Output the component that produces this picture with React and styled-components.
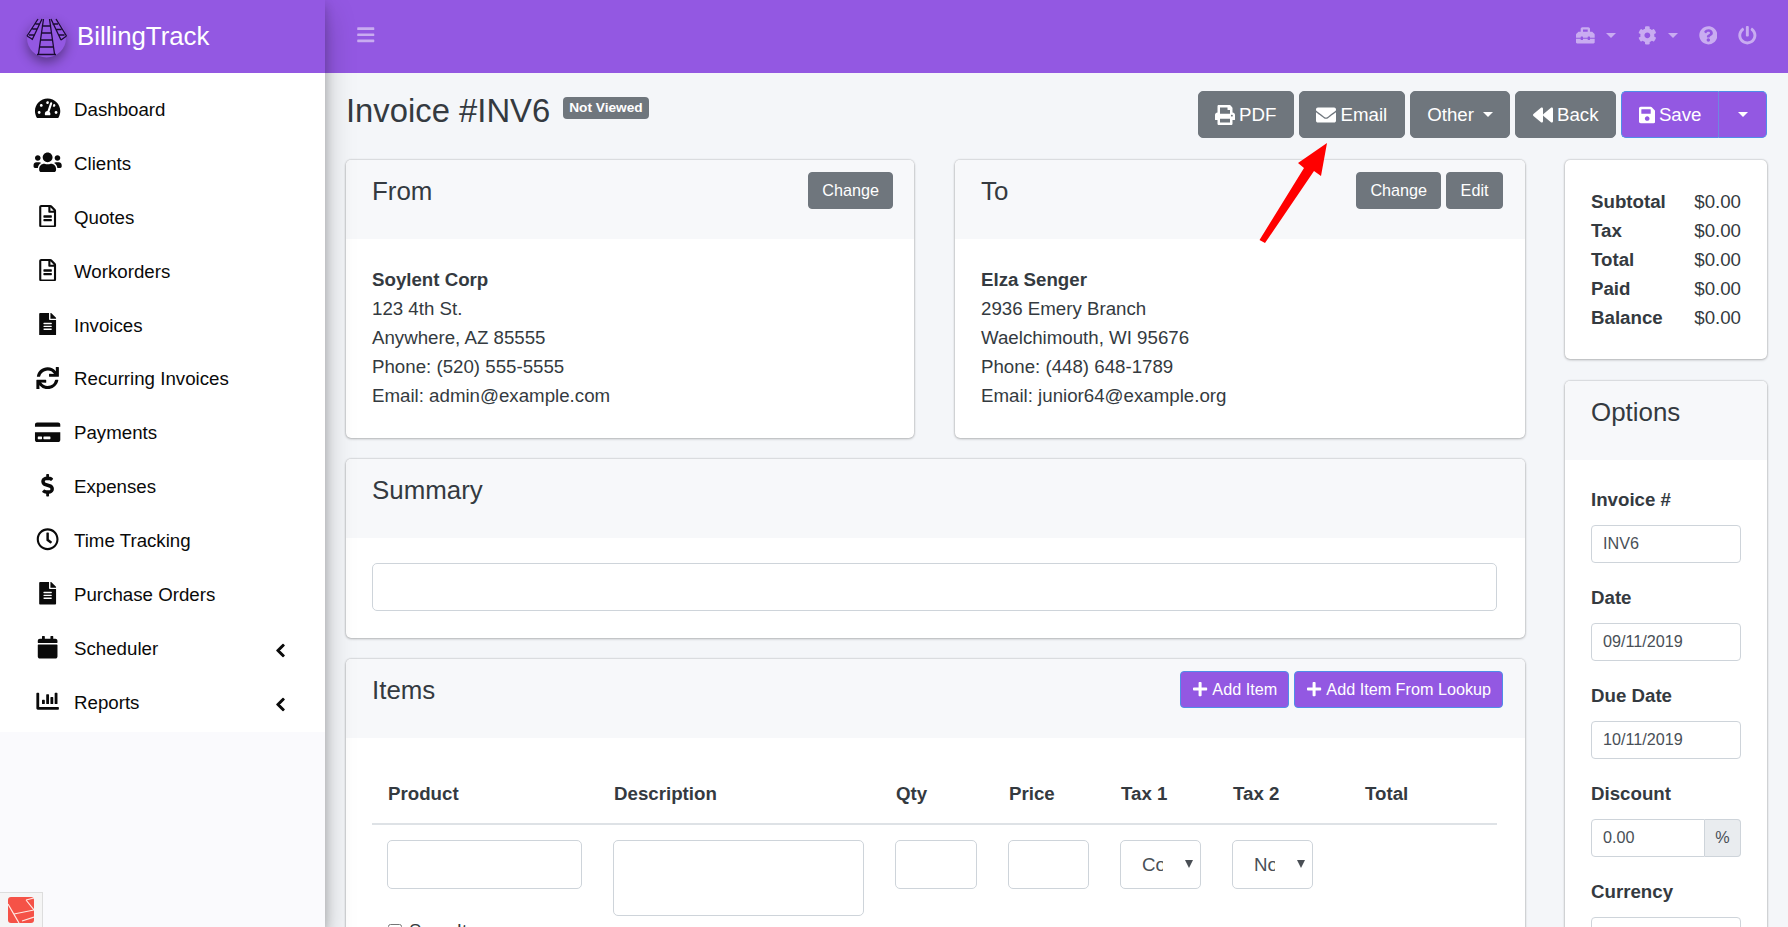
import React from "react";
import styled, { createGlobalStyle } from "styled-components";
import {
  FaTachometerAlt, FaUsers, FaRegFileAlt, FaFileAlt, FaSync, FaCreditCard, FaDollarSign,
  FaRegClock, FaCalendar, FaChartBar, FaChevronLeft, FaBars, FaToolbox, FaCog,
  FaQuestionCircle, FaPowerOff, FaPrint, FaEnvelope, FaBackward, FaSave, FaPlus,
} from "react-icons/fa";

const PURPLE = "#9358e2";
const GREY = "#6f767d";
const TEXT = "#343a40";

const Global = createGlobalStyle`
  html, body { margin: 0; height: 100%; overflow: hidden; }
  body { font-family: "Liberation Sans", Arial, sans-serif; font-size: 18.7px; line-height: 29px; color: ${TEXT}; background: #f4f6f9; }
  * { box-sizing: border-box; }
`;

const Shell = styled.div`
  display: flex;
  height: 927px;
  overflow: hidden;
  position: relative;
`;

const Sidebar = styled.aside`
  width: 325px;
  flex: none;
  display: flex;
  flex-direction: column;
  background: #fafafd;
  box-shadow: 0 14px 28px rgba(0,0,0,.25), 0 5px 10px rgba(0,0,0,.2);
  z-index: 2;
`;

const Brand = styled.div`
  height: 73px;
  flex: none;
  background: ${PURPLE};
  display: flex;
  align-items: center;
  gap: 9px;
  padding-left: 26px;
  color: #fff;
  font-size: 25.8px;
`;

const LogoSvg = styled.svg`
  overflow: visible;
`;

const LogoDisc = styled.circle`
  filter: drop-shadow(0 5px 6px rgba(0,0,0,.4));
`;

const Menu = styled.nav`
  background: #fff;
  padding: 9.5px 0 3px;
  display: flex;
  flex-direction: column;
`;

const MenuItem = styled.div`
  height: 53.9px;
  display: flex;
  align-items: center;
  color: #0a0a0a;
`;

const MenuIcon = styled.span`
  width: 30px;
  margin-left: 33px;
  margin-right: 11px;
  display: flex;
  justify-content: center;
  font-size: 22.5px;
  color: #0a0a0a;
  position: relative;
  top: -1px;
  svg { width: 1.3em; height: 1em; flex: none; }
`;

const MenuArrow = styled.span`
  margin-left: auto;
  margin-right: 37px;
  display: flex;
  font-size: 15px;
  position: relative;
  top: 2px;
  svg { stroke-width: 30; }
`;

const Main = styled.div`
  flex: 1;
  min-width: 0;
  display: flex;
  flex-direction: column;
`;

const TopBar = styled.header`
  height: 73px;
  flex: none;
  background: ${PURPLE};
  display: flex;
  align-items: center;
  padding: 0 31px 2px;
  color: rgba(255,255,255,.5);
`;

const TopSpacer = styled.div` flex: 1; `;

const TopIcon = styled.span`
  display: flex;
  align-items: center;
  gap: 11px;
  margin-left: ${p => p.$gap ?? 22}px;
  font-size: 18.7px;
`;

const Bars = styled.span`
  display: flex;
  font-size: 19.5px;
  margin-top: -1px;
`;

const SmallCaret = styled.span`
  width: 0;
  height: 0;
  border-left: 5px solid transparent;
  border-right: 5px solid transparent;
  border-top: 5px solid currentColor;
`;

const Content = styled.main`
  padding: 18px 21px 0 21px;
  display: flex;
  flex-direction: column;
  gap: 21px;
`;

const TitleRow = styled.div`
  display: flex;
  align-items: flex-start;
  height: 48px;
`;

const Title = styled.h1`
  margin: 1px 0 0;
  font-size: 32.8px;
  font-weight: 400;
  line-height: 38px;
  color: ${TEXT};
`;

const Badge = styled.span`
  background: ${GREY};
  color: #fff;
  font-size: 13.7px;
  font-weight: 700;
  line-height: 22px;
  height: 22px;
  padding: 0 6px;
  border-radius: 4px;
  margin: 6px 0 0 13px;
`;

const Actions = styled.div`
  margin-left: auto;
  display: flex;
  gap: 5px;
`;

const Btn = styled.button`
  font-family: inherit;
  font-size: 18.7px;
  line-height: 29px;
  height: 47px;
  padding: 0 16.5px;
  color: #fff;
  background: ${p => (p.$primary ? PURPLE : GREY)};
  border: 1px solid ${p => (p.$primary ? "#4f8ee8" : GREY)};
  border-radius: 5px;
  display: inline-flex;
  align-items: center;
  gap: 4px;
  svg { font-size: 20px; }
`;

const SplitWrap = styled.div`
  display: flex;
`;

const SplitMain = styled(Btn)`
  border-radius: 5px 0 0 5px;
  border-right-width: 0;
  width: 97px;
`;

const SplitCaret = styled(Btn)`
  border-radius: 0 5px 5px 0;
  width: 49px;
  justify-content: center;
  border-left-color: #6f86e0;
`;

const Caret = styled.span`
  width: 0;
  height: 0;
  border-left: 5.5px solid transparent;
  border-right: 5.5px solid transparent;
  border-top: 5.5px solid #fff;
  margin-left: ${p => p.$ml ?? 0}px;
`;

const SmallBtn = styled.button`
  font-family: inherit;
  font-size: 16.2px;
  height: 37px;
  padding: 0 ${p => p.$px ?? 13}px;
  color: #fff;
  background: ${p => (p.$primary ? PURPLE : GREY)};
  border: 1px solid ${p => (p.$primary ? "#4f8ee8" : GREY)};
  border-radius: 4px;
  display: inline-flex;
  align-items: center;
  gap: 4px;
`;

const Layout = styled.div`
  display: flex;
  gap: 40px;
  align-items: flex-start;
`;

const LeftCol = styled.div`
  width: 1179px;
  flex: none;
  display: flex;
  flex-direction: column;
  gap: 21px;
`;

const RightCol = styled.div`
  width: 202px;
  flex: none;
  display: flex;
  flex-direction: column;
  gap: 22px;
`;

const TwoUp = styled.div`
  display: grid;
  grid-template-columns: 568px 570px;
  gap: 41px;
`;

const Card = styled.section`
  background: #fff;
  border-radius: 5px;
  box-shadow: 0 0 2px rgba(0,0,0,.3), 0 1px 3px rgba(0,0,0,.2);
  overflow: hidden;
`;

const CardHead = styled.div`
  height: 79px;
  background: #f7f8fa;
  padding: 12px ${p => p.$right ?? 22}px 0 26px;
  display: flex;
  align-items: flex-start;
  gap: 5px;
`;

const CardTitle = styled.h3`
  margin: 0 auto 0 0;
  padding-top: 1px;
  font-size: 25.9px;
  font-weight: 400;
  line-height: 36px;
  color: ${TEXT};
`;

const SummaryBody = styled.div`
  padding: 25px 28px 27px 26px;
`;

const ItemsBody = styled.div`
  padding: 26px 26px 0;
`;

const AddrName = styled.div`
  font-weight: 700;
`;

const AddrBody = styled.div`
  padding: 26px 26px 21px;
  height: 199px;
`;

const WideInput = styled.input`
  display: block;
  width: 100%;
  height: 48px;
  border: 1px solid #ced4da;
  border-radius: 5px;
  background: #fff;
`;

const TableGrid = styled.div`
  display: grid;
  grid-template-columns: 226px 282px 113px 112px 112px 132px 148px;
`;

const HeadCell = styled.div`
  font-weight: 700;
  padding: 15px 15px 0 16px;
  height: 61px;
  border-bottom: 2px solid #dee2e6;
  line-height: 29px;
`;

const Cell = styled.div`
  padding: 15px 15px 0 15px;
  min-height: 93px;
`;

const FieldBox = styled.input`
  display: block;
  width: ${p => p.$w}px;
  height: 49px;
  border: 1px solid #ced4da;
  border-radius: 5px;
  background: #fff;
`;

const AreaBox = styled.textarea`
  display: block;
  width: 251px;
  height: 76px;
  border: 1px solid #ced4da;
  border-radius: 5px;
  background: #fff;
  resize: none;
`;

const SelectWrap = styled.div`
  position: relative;
  width: 81px;
  &::after {
    content: "";
    position: absolute;
    right: 8px;
    top: 20px;
    width: 0;
    height: 0;
    border-left: 4px solid transparent;
    border-right: 4px solid transparent;
    border-top: 8px solid #4a4f55;
    pointer-events: none;
  }
`;

const SelectBox = styled.select`
  display: block;
  width: 81px;
  height: 49px;
  padding: 0 37px 0 21px;
  appearance: none;
  font-family: inherit;
  font-size: 18.7px;
  color: #495057;
  border: 1px solid #ced4da;
  border-radius: 5px;
  background: #fff;
`;

const CheckLine = styled.label`
  display: flex;
  align-items: center;
  gap: 7px;
  margin-top: 27px;
  padding-left: 1px;
`;

const CheckBox = styled.input`
  margin: 0;
  width: 14px;
  height: 14px;
`;

const TotalsBody = styled.div`
  padding: 27px 26px 21px;
  height: 199px;
`;

const TotalRow = styled.div`
  display: flex;
  justify-content: space-between;
`;

const TotalLabel = styled.span`
  font-weight: 700;
`;

const OptionsBody = styled.div`
  padding: 25px 26px 0;
`;

const Field = styled.div`
  margin-bottom: 20.5px;
`;

const FieldLabel = styled.label`
  display: block;
  font-weight: 700;
  line-height: 29px;
  margin-bottom: 10.5px;
`;

const TextField = styled.input`
  display: block;
  width: 100%;
  height: 38px;
  padding: 0 11px;
  font-family: inherit;
  font-size: 16.2px;
  color: #495057;
  border: 1px solid #ced4da;
  border-radius: 4px;
  background: #fff;
`;

const InputGroup = styled.div`
  display: flex;
  height: 38px;
`;

const GroupField = styled(TextField)`
  flex: 1;
  min-width: 0;
  border-radius: 4px 0 0 4px;
`;

const Addon = styled.span`
  width: 36px;
  flex: none;
  background: #e9ecef;
  border: 1px solid #ced4da;
  border-left: 0;
  border-radius: 0 4px 4px 0;
  font-size: 16.2px;
  color: #495057;
  display: flex;
  align-items: center;
  justify-content: center;
`;

const ArrowOverlay = styled.svg`
  position: absolute;
  left: 1255px;
  top: 138px;
  width: 80px;
  height: 110px;
  z-index: 3;
`;

const DebugTab = styled.div`
  position: absolute;
  left: 0;
  bottom: 0;
  width: 43px;
  height: 35px;
  background: #f5f5f5;
  border-top: 1px solid #ddd;
  border-right: 1px solid #ddd;
  display: flex;
  align-items: center;
  justify-content: center;
  z-index: 4;
`;

const Logo = () => (
  <LogoSvg width="42" height="44" viewBox="0 0 42 44" fill="none" stroke="#1b0b33" strokeWidth="1.3">
    <LogoDisc cx="20.5" cy="23" r="19.5" fill="#9358e2" stroke="none" />
    <path d="M17.5 4 L12.5 39 M23.5 4 L28.5 39 M11 39.5 H30 M15.8 11 H25.2 M15 18 H26 M14 25 H27 M13 32 H28" />
    <path d="M12 4 L1 21 M16 4 L6 25 M3 20 L9 20 M6.3 14 L11.5 14 M9.5 9 L14 9 M1 21 L6 24" />
    <path d="M25 4 L35 25 M30 4 L40.5 21 M26.5 9 L32 9 M29.5 14.5 L35.5 14.5 M32.5 20 L38.5 20 M35 25 L40.5 21" />
  </LogoSvg>
);

const LaravelMark = () => (
  <svg width="26" height="26" viewBox="0 0 26 26">
    <rect width="26" height="26" rx="3" fill="#f55247" />
    <path d="M0 7 L11 26 M6 17 L26 13 M18 3 L26 1 M18 3 L26 13 M14 24 L26 20" stroke="#ffe9e4" strokeWidth="1.2" fill="none" />
  </svg>
);

const menu = [
  [FaTachometerAlt, "Dashboard"], [FaUsers, "Clients"], [FaRegFileAlt, "Quotes"], [FaRegFileAlt, "Workorders"],
  [FaFileAlt, "Invoices"], [FaSync, "Recurring Invoices"], [FaCreditCard, "Payments"], [FaDollarSign, "Expenses"],
  [FaRegClock, "Time Tracking"], [FaFileAlt, "Purchase Orders"], [FaCalendar, "Scheduler", true], [FaChartBar, "Reports", true],
];

const fromLines = ["123 4th St.", "Anywhere, AZ 85555", "Phone: (520) 555-5555", "Email: admin@example.com"];
const toLines = ["2936 Emery Branch", "Waelchimouth, WI 95676", "Phone: (448) 648-1789", "Email: junior64@example.org"];
const totals = ["Subtotal", "Tax", "Total", "Paid", "Balance"];
const heads = ["Product", "Description", "Qty", "Price", "Tax 1", "Tax 2", "Total"];
const fields = [["Invoice #", "INV6"], ["Date", "09/11/2019"], ["Due Date", "10/11/2019"]];

export default function App() {
  return (
    <Shell>
      <Global />
      <Sidebar>
        <Brand><Logo />BillingTrack</Brand>
        <Menu>
          {menu.map(([Icon, label, more]) => (
            <MenuItem key={label}>
              <MenuIcon><Icon /></MenuIcon>
              {label}
              {more && <MenuArrow><FaChevronLeft /></MenuArrow>}
            </MenuItem>
          ))}
        </Menu>
      </Sidebar>
      <Main>
        <TopBar>
          <Bars><FaBars /></Bars>
          <TopSpacer />
          <TopIcon><FaToolbox /><SmallCaret /></TopIcon>
          <TopIcon><FaCog /><SmallCaret /></TopIcon>
          <TopIcon $gap={21}><FaQuestionCircle /></TopIcon>
          <TopIcon $gap={21}><FaPowerOff /></TopIcon>
        </TopBar>
        <Content>
          <TitleRow>
            <Title>Invoice #INV6</Title>
            <Badge>Not Viewed</Badge>
            <Actions>
              <Btn><FaPrint />PDF</Btn>
              <Btn><FaEnvelope />Email</Btn>
              <Btn>Other<Caret $ml={5} /></Btn>
              <Btn><FaBackward />Back</Btn>
              <SplitWrap>
                <SplitMain $primary><FaSave />Save</SplitMain>
                <SplitCaret $primary><Caret /></SplitCaret>
              </SplitWrap>
            </Actions>
          </TitleRow>
          <Layout>
            <LeftCol>
              <TwoUp>
                <Card>
                  <CardHead $right={21}><CardTitle>From</CardTitle><SmallBtn>Change</SmallBtn></CardHead>
                  <AddrBody>
                    <AddrName>Soylent Corp</AddrName>
                    {fromLines.map(l => <div key={l}>{l}</div>)}
                  </AddrBody>
                </Card>
                <Card>
                  <CardHead><CardTitle>To</CardTitle><SmallBtn>Change</SmallBtn><SmallBtn $px={13.5}>Edit</SmallBtn></CardHead>
                  <AddrBody>
                    <AddrName>Elza Senger</AddrName>
                    {toLines.map(l => <div key={l}>{l}</div>)}
                  </AddrBody>
                </Card>
              </TwoUp>
              <Card>
                <CardHead><CardTitle>Summary</CardTitle></CardHead>
                <SummaryBody><WideInput /></SummaryBody>
              </Card>
              <Card>
                <CardHead>
                  <CardTitle>Items</CardTitle>
                  <SmallBtn $primary $px={11}><FaPlus />Add Item</SmallBtn>
                  <SmallBtn $primary $px={11}><FaPlus />Add Item From Lookup</SmallBtn>
                </CardHead>
                <ItemsBody>
                  <TableGrid>
                    {heads.map(h => <HeadCell key={h}>{h}</HeadCell>)}
                    <Cell>
                      <FieldBox $w={195} />
                      <CheckLine><CheckBox type="checkbox" />Save Item</CheckLine>
                    </Cell>
                    <Cell><AreaBox /></Cell>
                    <Cell><FieldBox $w={82} /></Cell>
                    <Cell><FieldBox $w={81} /></Cell>
                    <Cell><SelectWrap><SelectBox><option>Commodity</option></SelectBox></SelectWrap></Cell>
                    <Cell><SelectWrap><SelectBox><option>None</option></SelectBox></SelectWrap></Cell>
                    <Cell />
                  </TableGrid>
                </ItemsBody>
              </Card>
            </LeftCol>
            <RightCol>
              <Card>
                <TotalsBody>
                  {totals.map(t => (
                    <TotalRow key={t}><TotalLabel>{t}</TotalLabel><span>$0.00</span></TotalRow>
                  ))}
                </TotalsBody>
              </Card>
              <Card>
                <CardHead><CardTitle>Options</CardTitle></CardHead>
                <OptionsBody>
                  {fields.map(([l, v]) => (
                    <Field key={l}><FieldLabel>{l}</FieldLabel><TextField defaultValue={v} /></Field>
                  ))}
                  <Field>
                    <FieldLabel>Discount</FieldLabel>
                    <InputGroup><GroupField defaultValue="0.00" /><Addon>%</Addon></InputGroup>
                  </Field>
                  <Field><FieldLabel>Currency</FieldLabel><TextField /></Field>
                </OptionsBody>
              </Card>
            </RightCol>
          </Layout>
        </Content>
      </Main>
      <ArrowOverlay viewBox="1255 138 80 110">
        <path d="M1259.5 240 L1304 168 L1298 163 L1327 143 L1321 176 L1314 171 L1265 243 Z" fill="#ff0000" />
      </ArrowOverlay>
      <DebugTab><LaravelMark /></DebugTab>
    </Shell>
  );
}
